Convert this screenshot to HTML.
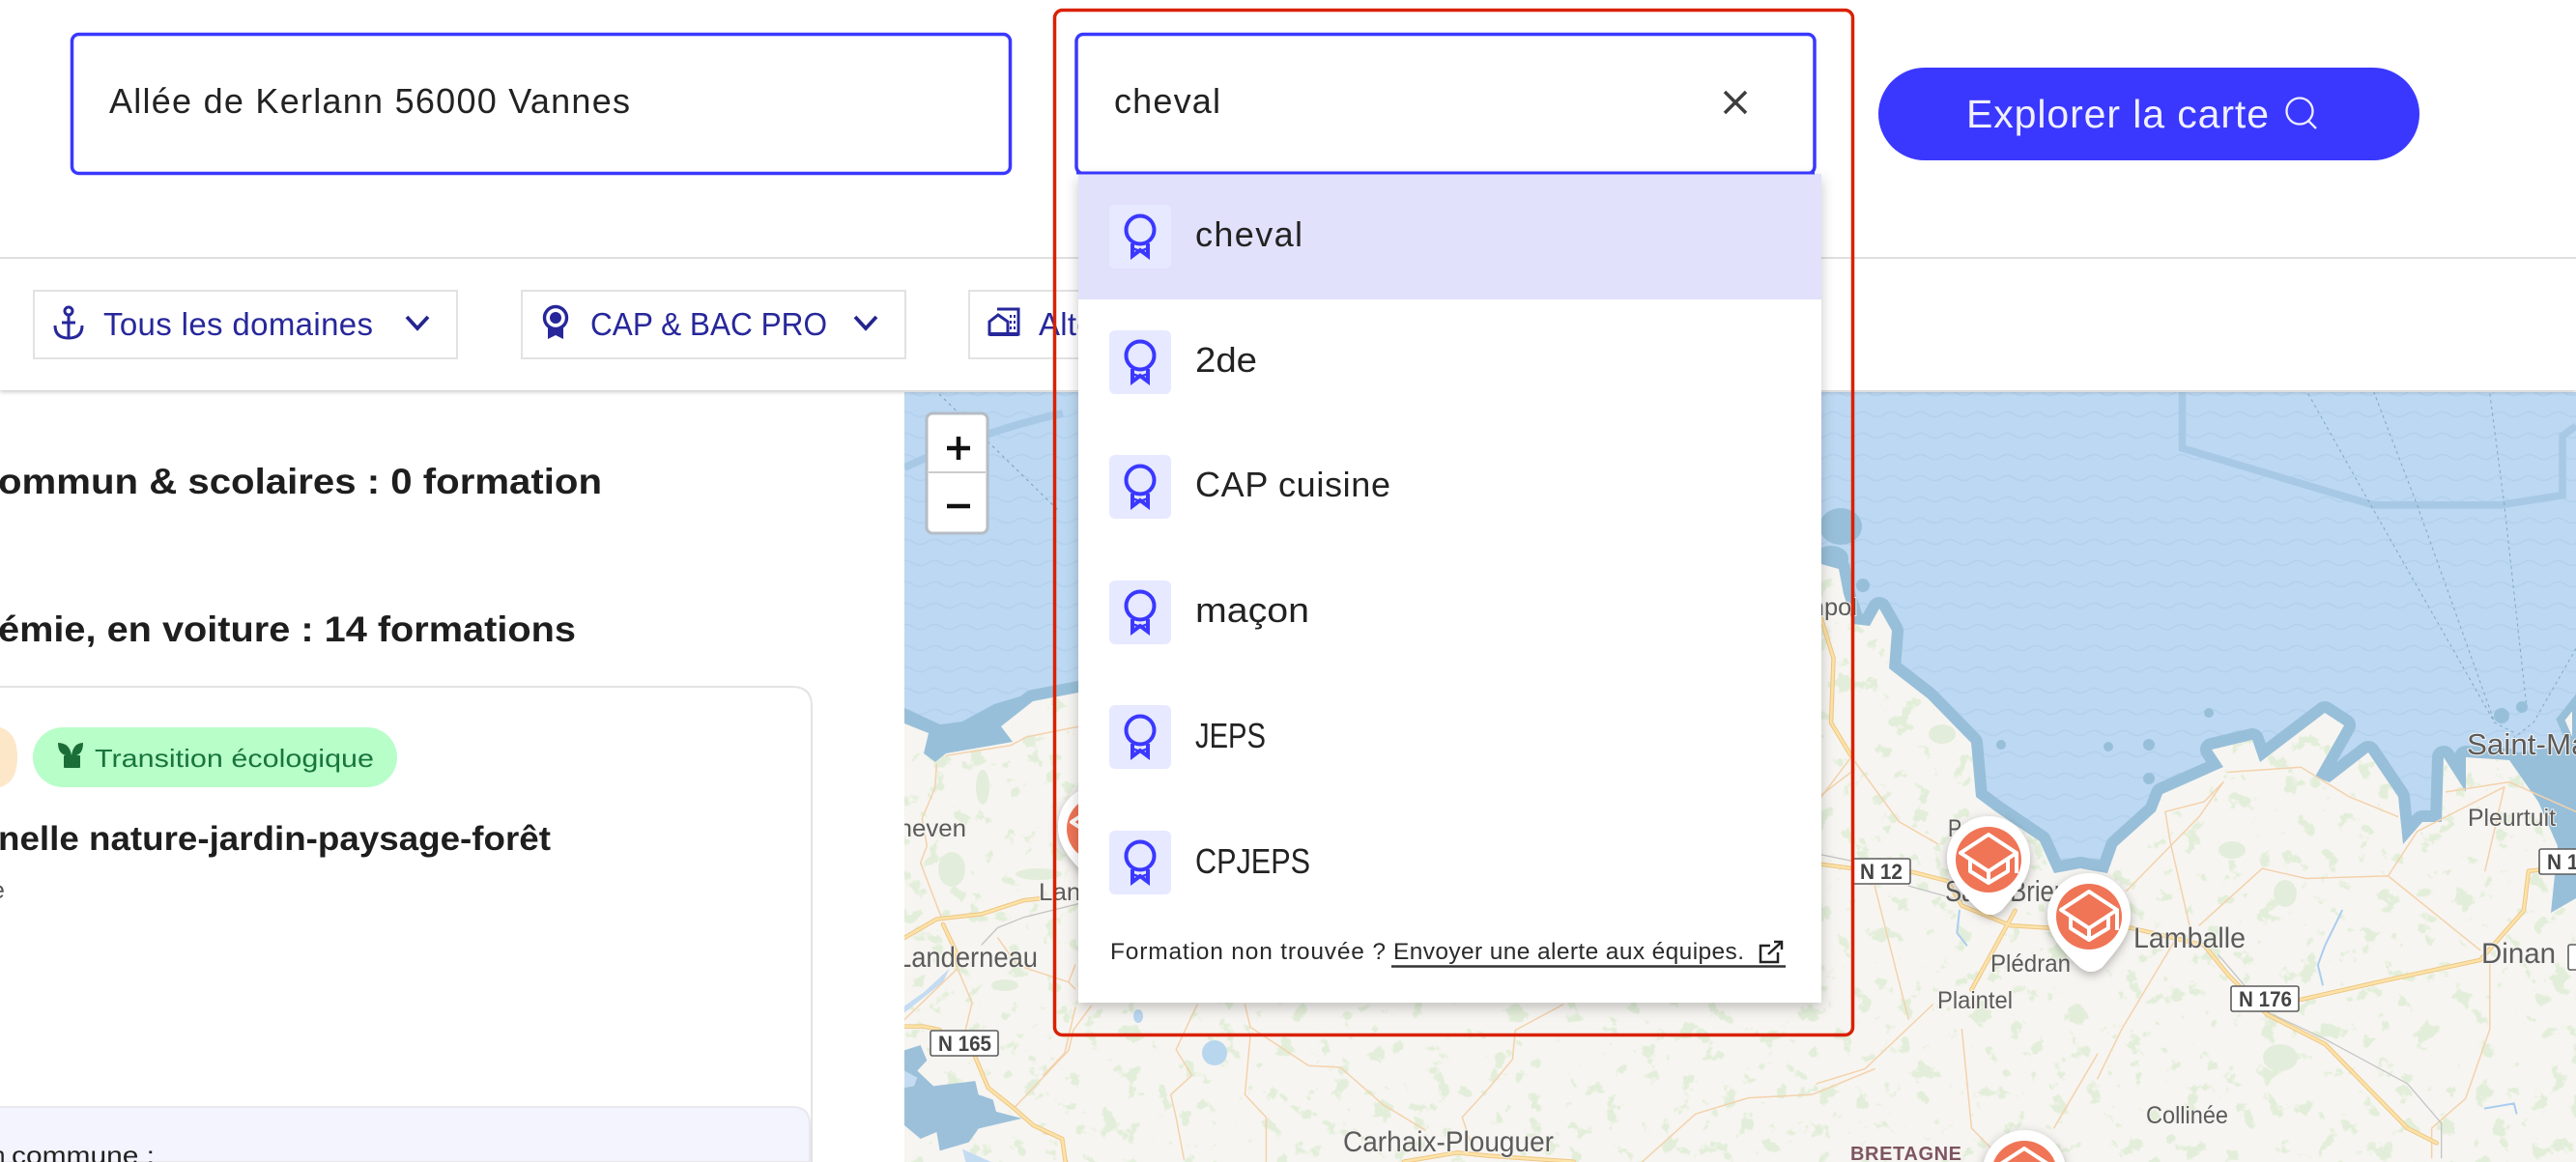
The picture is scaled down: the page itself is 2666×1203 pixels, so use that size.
<!DOCTYPE html>
<html lang="fr"><head><meta charset="utf-8"><title>Carte des formations</title>
<style>
html,body{margin:0;padding:0;background:#fff;width:2666px;height:1203px;overflow:hidden}
svg{display:block}
text{font-family:"Liberation Sans",sans-serif}
.m{fill:#5b5b5b;font-size:27px;paint-order:stroke;stroke:#f7f5f1;stroke-width:2px}
.sh{fill:#fff;stroke:#5d5d5d;stroke-width:1.6}
.st{fill:#444;font-size:22px;font-weight:bold;}
.t{fill:#222;font-size:36px}
.b{fill:#1e1e1e;font-size:37px;font-weight:bold}
.c{fill:#27279b;font-size:33px}
.thin path,.grey path,.riv path,#mains path{vector-effect:non-scaling-stroke;fill:none;stroke-linejoin:round;stroke-linecap:round}
</style></head>
<body>
<svg width="2666" height="1203" viewBox="0 0 2666 1203" xmlns="http://www.w3.org/2000/svg">
<defs>
<pattern id="wave" width="30" height="22" patternUnits="userSpaceOnUse"><rect width="30" height="22" fill="#bcd8f2"/><path d="M0 11Q7.500 6 15 11T30 11" fill="none" stroke="#b3d1ed" stroke-width="1.500"/></pattern>
<clipPath id="mapclip"><rect x="936" y="406" width="1730" height="797"/></clipPath>
<clipPath id="landclip"><path id="landshape" d="M936 749L961 759L956 780L968 789L979 780L1048 768L1036 752L1069 726L1116 717L1500 650L1885 584L1903 589L1908 615L1918 646L1935 648L1945 630L1958 653L1955 692L1995 723L2040 769L2045 825L2065 840L2111 871L2126 904L2153 899L2181 904L2191 876L2231 840L2238 822L2301 794L2289 776L2331 766L2339 789L2406 738L2426 751L2396 804L2411 810L2451 779L2482 825L2487 874L2507 851L2527 851L2529 784L2552 820L2552 784L2597 787L2627 830L2647 876L2640 945L2666 930L2666 1203L936 1203Z"/></clipPath>
<filter id="fore" x="0" y="0" width="1" height="1" color-interpolation-filters="sRGB"><feTurbulence type="fractalNoise" baseFrequency=".05" numOctaves="4" seed="7"/><feColorMatrix type="matrix" values="0 0 0 0 .885  0 0 0 0 .935  0 0 0 0 .85  14 0 0 0 -8.700"/></filter>
<filter id="ds" x="-20%" y="-20%" width="140%" height="140%"><feDropShadow dx="0" dy="3" stdDeviation="5" flood-color="#000" flood-opacity=".3"/></filter>
<filter id="dd" x="-5%" y="-5%" width="110%" height="110%"><feDropShadow dx="0" dy="5" stdDeviation="7" flood-color="#000" flood-opacity=".22"/></filter>
<filter id="bar" x="-2%" y="-20%" width="104%" height="150%"><feDropShadow dx="0" dy="2" stdDeviation="2" flood-color="#000" flood-opacity=".2"/></filter>
<g id="cap" fill="none" stroke="#fff" stroke-width="4" stroke-linejoin="round"><path d="M0-26L-29-7L0 12L29-7Z"/><path d="M-19 0V12L0 24L20 12V0M0 12V24M29-7V14"/></g>
<g id="marker"><path d="M-43 0A43 43 0 0 1 43 0C43 20 30 35 14 54Q2 64-10 54C-30 35-43 20-43 0Z" fill="#fff" filter="url(#ds)"/><circle r="34" cy="2" fill="#ef7556"/><use href="#cap" y="2"/></g>
<g id="rib" fill="none" stroke="#3a38ff" stroke-width="4"><circle cx="0" cy="-7" r="14.500"/><path d="M-8 7V20L0 14L8 20V7" stroke-linejoin="miter"/><path d="M-8 12L0 15L8 12" stroke-width="2.500"/></g>
<g id="chev"><path d="M-11-6L0 6L11-6" fill="none" stroke="#24248f" stroke-width="3.800"/></g>
<g id="mains">
 <g transform="translate(1880,400) scale(.5013,.512)"><path d="M0 965L75 975M190 980L270 1000L300 1050L400 1090L480 1095L650 1095L800 1130L850 1190L930 1270L1050 1330L1150 1430L1220 1500L1280 1530"/><path d="M1000 1240L1180 1200L1370 1160L1460 1060L1470 980L1568 970M410 1060L320 1220M10 470L35 550L30 680L70 745"/></g>
 <g transform="translate(936,650) scale(.3333,.3527)"><path d="M0 910L100 855L240 840L370 800L420 795M120 870L160 950L165 990M0 1170L60 1170L110 1180M220 1260L260 1350L340 1410L400 1460L490 1500L500 1568"/></g>
 <g transform="translate(1080,780) scale(.5485,.3333)"><path d="M680 1268L780 1240L840 1250L1000 1268"/></g>
</g>
</defs>

<rect width="2666" height="1203" fill="#fff"/>

<!-- MAP -->
<g clip-path="url(#mapclip)">
<rect x="936" y="406" width="1730" height="797" fill="url(#wave)"/>
<g transform="translate(1880,400) scale(.5013,.512)" fill="none">
<path d="M755 0V125L1150 240H1410L1540 220V100L1568 80" stroke="#a8c9e5" stroke-width="15"/>
<g stroke="#7fa9c0" stroke-width="2" stroke-dasharray="6 7"><path d="M1015 15L1150 250L1400 680L1440 700"/><path d="M1150 10L1240 240L1400 680"/><path d="M1390 15L1420 240L1465 640"/><path d="M1568 530L1480 680L1440 710"/></g>
</g>
<path d="M936 484Q1020 445 1100 428" fill="none" stroke="#a8c9e5" stroke-width="8"/>
<path d="M972 408L1095 528" fill="none" stroke="#7fa9c0" stroke-width="1.200" stroke-dasharray="3 4"/>
<!-- coast band -->
<g fill="#98bfd9">
<ellipse cx="1905" cy="545" rx="22" ry="19"/><ellipse cx="1895" cy="578" rx="18" ry="13"/><circle cx="1928" cy="606" r="7"/><circle cx="2286" cy="738" r="5"/><circle cx="2071" cy="771" r="5"/><circle cx="2182" cy="773" r="5"/><circle cx="2224" cy="771" r="6"/><circle cx="2224" cy="806" r="6"/><circle cx="2589" cy="741" r="8"/><circle cx="2610" cy="732" r="6"/>
<path d="M2600 780L2666 770V940L2650 960L2636 955L2640 880L2615 835Z"/>
<path d="M936 733L973 750L996 747L1029 729L1069 717L1116 710V735L1060 770L980 795L960 800L945 785L936 755Z"/>
</g>
<use href="#landshape" fill="#98bfd9" stroke="#98bfd9" stroke-width="24" stroke-linejoin="round"/>
<use href="#landshape" fill="#f7f5f1"/>
<path d="M2666 725L2650 745L2666 782Z" fill="#f7f5f1" stroke="#98bfd9" stroke-width="8"/>
<g clip-path="url(#landclip)"><rect x="936" y="560" width="1730" height="643" filter="url(#fore)"/></g>
<!-- Rade de Brest -->
<g transform="translate(936,650) scale(.3333,.3527)">
<path d="M0 1240L50 1225L70 1270L40 1300L90 1345L220 1330L230 1370L275 1385L285 1420L365 1440L230 1470L200 1510L110 1535L100 1480L50 1500L0 1460Z" fill="#9cc0da"/>
<path d="M0 1300L40 1320L30 1345L0 1350ZM0 1110L60 1070L140 1000L120 1040L0 1130ZM180 1530L270 1568H190Z" fill="#c4dcf2"/>
</g>
<g fill="#e3eddb"><ellipse cx="1017" cy="815" rx="7" ry="18"/><ellipse cx="985" cy="900" rx="14" ry="18"/><ellipse cx="1075" cy="905" rx="24" ry="6"/><ellipse cx="1040" cy="1020" rx="14" ry="6"/><ellipse cx="2010" cy="760" rx="14" ry="10"/><ellipse cx="2310" cy="880" rx="14" ry="9"/><ellipse cx="2365" cy="925" rx="12" ry="14"/><ellipse cx="2360" cy="1095" rx="18" ry="14"/></g>
<!-- lakes -->
<ellipse cx="1257" cy="1090" rx="13" ry="13" fill="#b9d6ef"/><ellipse cx="1178" cy="1052" rx="5" ry="7" fill="#b9d6ef"/>
<!-- thin roads -->
<g class="thin" stroke="#f3d2ac" stroke-width="1.500" fill="none">
<g transform="translate(1880,400) scale(.5013,.512)"><path d="M720 860L730 920L770 1090M640 1020L790 870L840 800M790 1090L920 975L1010 995L1180 990L1370 1140M1390 1160L1390 1300L1340 1440L1270 1500L1270 1560M1180 990L1240 900L1420 810M580 1400L630 1300L740 1120M490 1500L580 1350M0 1410L100 1380L240 1250M300 1300L320 1500L360 1540M120 1010L190 1280M80 760L170 880L250 925M75 745L10 830M850 780L1000 770L1100 830L1200 870M1420 810L1380 980M1300 820L1430 800L1568 860M720 860L800 840L840 800"/></g>
<g transform="translate(936,650) scale(.3333,.3527)"><path d="M100 400L95 470L55 560L70 640L50 690L115 850M130 375L330 345L380 320L540 290M165 1000L210 1100L190 1180M165 1000L0 1150M290 910L350 990L510 1040L530 1060M340 1410L510 1240L525 1180L580 1110M510 1040L530 990"/></g>
<g transform="translate(1080,780) scale(.5485,.3333)"><path d="M380 780L390 850L500 970L560 975L640 1090L720 1170M980 780L890 860L885 950L840 1040L790 1130L810 1230M1130 1268L1230 1120L1330 1070L1450 1060L1568 980M290 780L250 920L280 1000L240 1060L250 1130L265 1260M0 1000L40 930L60 790M390 880L380 1060L420 1130L420 1268M0 1180L30 1190L45 1268M1467 130L1530 50"/></g>
</g>
<g class="grey" stroke="#c4c4c4" stroke-width="1.300" fill="none">
<g transform="translate(1880,400) scale(.5013,.512)"><path d="M0 945L75 960M190 1010L300 1040M830 1150L930 1265L1050 1320L1220 1410L1290 1490L1290 1560"/></g>
<g transform="translate(936,650) scale(.3333,.3527)"><path d="M240 930L290 880L370 850L540 810"/></g>
</g>
<g class="riv" stroke="#a9cdef" stroke-width="2" fill="none"><g transform="translate(1880,400) scale(.5013,.512)"><path d="M295 1060L290 1105L310 1130M1085 1060L1050 1130L1035 1170L1045 1210M1380 1460L1440 1450L1445 1470"/></g></g>
<use href="#mains" stroke="#efc685" stroke-width="4.500" fill="none"/>
<use href="#mains" stroke="#fce3a8" stroke-width="2.500" fill="none"/>
<!-- labels -->
<text class="m" x="2553" y="781" textLength="150" lengthAdjust="spacingAndGlyphs" style="font-size:31px">Saint-Malo</text>
<text class="m" x="2554" y="855" textLength="91" lengthAdjust="spacingAndGlyphs" style="font-size:25px">Pleurtuit</text>
<text class="m" x="2208" y="981" textLength="116" lengthAdjust="spacingAndGlyphs" style="font-size:30px">Lamballe</text>
<text class="m" x="2568" y="997" textLength="77" lengthAdjust="spacingAndGlyphs" style="font-size:30px">Dinan</text>
<text class="m" x="2060" y="1006" textLength="83" lengthAdjust="spacingAndGlyphs" style="font-size:25px">Plédran</text>
<text class="m" x="2005" y="1044" textLength="78" lengthAdjust="spacingAndGlyphs" style="font-size:25px">Plaintel</text>
<text class="m" x="2221" y="1163" textLength="85" lengthAdjust="spacingAndGlyphs" style="font-size:25px">Collinée</text>
<text x="1915" y="1201" textLength="115" lengthAdjust="spacing" style="font-size:20px;font-weight:bold;fill:#7d5560">BRETAGNE</text>
<text class="m" x="1830" y="637" textLength="92" lengthAdjust="spacingAndGlyphs" style="font-size:25px">Paimpol</text>
<text class="m" x="2013" y="933" textLength="140" lengthAdjust="spacingAndGlyphs" style="font-size:31px">Saint-Brieuc</text>
<text class="m" x="2016" y="866" textLength="60" lengthAdjust="spacingAndGlyphs" style="font-size:25px">Pordic</text>
<text class="m" x="928" y="1001" textLength="146" lengthAdjust="spacingAndGlyphs" style="font-size:30px">Landerneau</text>
<text class="m" x="888" y="866" textLength="112" lengthAdjust="spacingAndGlyphs" style="font-size:25px">Lesneven</text>
<text class="m" x="1075" y="932" textLength="130" lengthAdjust="spacingAndGlyphs" style="font-size:25px">Landivisiau</text>
<text class="m" x="1390" y="1192" textLength="218" lengthAdjust="spacingAndGlyphs" style="font-size:30px">Carhaix-Plouguer</text>
<!-- shields -->
<rect class="sh" x="1917" y="889" width="60" height="26" rx="2"/><text class="st" x="1925" y="910" textLength="44" lengthAdjust="spacingAndGlyphs">N 12</text>
<rect class="sh" x="2309" y="1021" width="70" height="26" rx="2"/><text class="st" x="2317" y="1042" textLength="55" lengthAdjust="spacingAndGlyphs">N 176</text>
<rect class="sh" x="2628" y="879" width="45" height="26" rx="2"/><text class="st" x="2636" y="900" textLength="44" lengthAdjust="spacingAndGlyphs">N 12</text>
<rect class="sh" x="2658" y="978" width="15" height="26" rx="2"/>
<rect class="sh" x="963" y="1067" width="70" height="26" rx="2"/><text class="st" x="971" y="1088" textLength="55" lengthAdjust="spacingAndGlyphs">N 165</text>
<!-- markers -->
<use href="#marker" x="1138" y="856"/>
<use href="#marker" x="2058" y="888"/>
<use href="#marker" x="2162" y="947"/>
<use href="#marker" x="2095" y="1213"/>
<!-- zoom -->
<rect x="959" y="428" width="63" height="124" rx="6" fill="#fff" stroke="#b5bcc4" stroke-width="3"/>
<rect x="961" y="488" width="59" height="2" fill="#ccc"/>
<path d="M980 464H1004M992 452V476M980 524H1004" stroke="#111" stroke-width="4.500" fill="none"/>
</g>

<!-- LEFT PANEL -->
<text class="b" x="-2" y="511" textLength="625" lengthAdjust="spacingAndGlyphs">ommun &amp; scolaires : 0 formation</text>
<text class="b" x="-2" y="664" textLength="598" lengthAdjust="spacingAndGlyphs">émie, en voiture : 14 formations</text>
<path d="M-5 711H820Q840 711 840 731V1203" fill="none" stroke="#e3e3e3" stroke-width="2"/>
<path d="M0 753Q18 758 18 784Q18 810 0 815Z" fill="#fde7c9"/>
<rect x="34" y="753" width="377" height="62" rx="31" fill="#b8fec9"/>
<g fill="#1c6e38"><rect x="66" y="782" width="17" height="13" rx="1"/><path d="M60 769Q72 769 74 782H68Q60 780 60 769ZM86 769Q76 769 74 782H79Q86 780 86 769Z"/></g>
<text x="98" y="794" textLength="289" lengthAdjust="spacingAndGlyphs" style="font-size:26px;fill:#18753c">Transition écologique</text>
<text x="-2" y="880" textLength="572" lengthAdjust="spacingAndGlyphs" style="font-size:35px;font-weight:bold;fill:#1e1e1e">nelle nature-jardin-paysage-forêt</text>
<text x="-9" y="930" style="font-size:25px;fill:#555">e</text>
<path d="M-5 1146H820Q838 1146 838 1164V1203H-5Z" fill="#f3f4fd" stroke="#e8e8ee" stroke-width="2"/>
<text x="-9" y="1205" style="font-size:26px;fill:#222">n</text>
<text x="12" y="1205" textLength="148" lengthAdjust="spacingAndGlyphs" style="font-size:26px;fill:#222">commune :</text>

<!-- HEADER -->
<rect x="0" y="266" width="2666" height="2" fill="#e3e3e3"/>
<rect x="0" y="268" width="2666" height="136" fill="#fff" filter="url(#bar)"/>
<rect x="74.500" y="35.500" width="971" height="144" rx="7" fill="#fff" stroke="#3a38ff" stroke-width="3.500"/>
<text class="t" x="113" y="117" textLength="539" lengthAdjust="spacing">Allée de Kerlann 56000 Vannes</text>
<rect x="1114" y="35.500" width="764" height="144" rx="7" fill="#fff" stroke="#3a38ff" stroke-width="3.500"/>
<text class="t" x="1153" y="117" textLength="110" lengthAdjust="spacing">cheval</text>
<path d="M1785 95L1807 117M1807 95L1785 117" stroke="#3d3d3d" stroke-width="3.500" fill="none"/>
<rect x="1944" y="70" width="560" height="96" rx="48" fill="#3a38ff"/>
<text x="2035" y="132" textLength="313" lengthAdjust="spacing" style="font-size:41px;fill:#f0f0ff">Explorer la carte</text>
<circle cx="2380" cy="115" r="13.500" fill="none" stroke="#eef" stroke-width="2.300"/><path d="M2389 125L2397 133" stroke="#eef" stroke-width="2.300"/>

<!-- chips -->
<rect x="35" y="301" width="438" height="70" fill="#fff" stroke="#e2e2e2" stroke-width="2"/>
<g fill="none" stroke="#27279b" stroke-width="3"><circle cx="71" cy="322" r="4"/><path d="M71 326V350M57 337Q57 350 71 350Q85 350 85 337M64 334H78"/></g>
<text class="c" x="107" y="347" textLength="279" lengthAdjust="spacing">Tous les domaines</text>
<use href="#chev" x="432" y="334"/>
<rect x="540" y="301" width="397" height="70" fill="#fff" stroke="#e2e2e2" stroke-width="2"/>
<circle cx="575" cy="329" r="11.500" fill="none" stroke="#27279b" stroke-width="3.400"/><circle cx="575" cy="329" r="6" fill="#27279b"/><path d="M567 339V351L575 347L583 351V339Z" fill="#27279b"/>
<text class="c" x="611" y="347" textLength="245" lengthAdjust="spacingAndGlyphs">CAP &amp; BAC PRO</text>
<use href="#chev" x="896" y="334"/>
<rect x="1003" y="301" width="300" height="70" fill="#fff" stroke="#e2e2e2" stroke-width="2"/>
<g fill="none" stroke="#27279b" stroke-width="3"><path d="M1032 320H1054V346H1024V333L1033 326L1043 333V346"/><path d="M1024 346H1054" stroke-width="4"/><path d="M1046 326V342M1050 326V342" stroke-dasharray="3 3" stroke-width="2"/></g>
<text class="c" x="1075" y="347" textLength="160" lengthAdjust="spacing">Alternance</text>

<!-- DROPDOWN -->
<rect x="1116" y="180" width="769" height="858" fill="#fff" filter="url(#dd)"/>
<rect x="1116" y="180" width="769" height="130" fill="#e1e1fb"/>
<path d="M1114 179H1878" stroke="#3a38ff" stroke-width="3"/>
<g fill="#e6e9ff"><rect x="1148" y="212" width="64" height="66" rx="6"/><rect x="1148" y="342" width="64" height="66" rx="6"/><rect x="1148" y="471" width="64" height="66" rx="6"/><rect x="1148" y="601" width="64" height="66" rx="6"/><rect x="1148" y="730" width="64" height="66" rx="6"/><rect x="1148" y="860" width="64" height="66" rx="6"/></g>
<use href="#rib" x="1180" y="245"/><use href="#rib" x="1180" y="375"/><use href="#rib" x="1180" y="504"/><use href="#rib" x="1180" y="634"/><use href="#rib" x="1180" y="763"/><use href="#rib" x="1180" y="893"/>
<text class="t" x="1237" y="255" textLength="111" lengthAdjust="spacing">cheval</text>
<text class="t" x="1237" y="385" textLength="64" lengthAdjust="spacingAndGlyphs">2de</text>
<text class="t" x="1237" y="514" textLength="202" lengthAdjust="spacing">CAP cuisine</text>
<text class="t" x="1237" y="644" textLength="118" lengthAdjust="spacingAndGlyphs">maçon</text>
<text class="t" x="1237" y="774" textLength="73" lengthAdjust="spacingAndGlyphs">JEPS</text>
<text class="t" x="1237" y="904" textLength="119" lengthAdjust="spacingAndGlyphs">CPJEPS</text>
<text x="1149" y="993" textLength="285" lengthAdjust="spacing" style="font-size:24.500px;fill:#2a2a2a">Formation non trouvée ?</text>
<text x="1442" y="993" textLength="363" lengthAdjust="spacing" style="font-size:24.500px;fill:#2a2a2a">Envoyer une alerte aux équipes.</text>
<path d="M1440 1000.500H1848" stroke="#333" stroke-width="2.500"/>
<path d="M1832 979H1822V996H1840V986M1830 988L1843 976M1836 975H1844V983" fill="none" stroke="#222" stroke-width="2.500"/>

<!-- RED OUTLINE -->
<rect x="1091.500" y="10.500" width="826" height="1061" rx="8" fill="none" stroke="#d92100" stroke-width="3.500"/>
</svg>
</body></html>
